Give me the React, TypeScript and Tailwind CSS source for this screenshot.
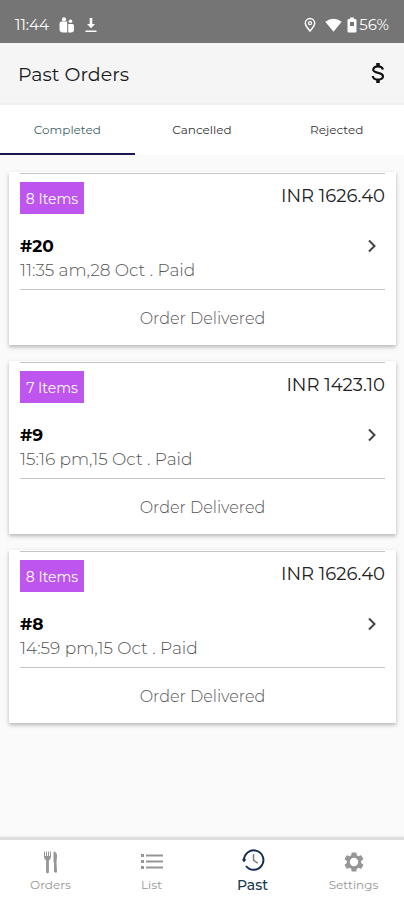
import { useState } from "react";
import type { ReactNode } from "react";

type Order = { id: string; items: number; total: string; time: string };

const orders: Order[] = [
  { id: "20", items: 8, total: "1626.40", time: "11:35 am,28 Oct . Paid" },
  { id: "9", items: 7, total: "1423.10", time: "15:16 pm,15 Oct . Paid" },
  { id: "8", items: 8, total: "1626.40", time: "14:59 pm,15 Oct . Paid" },
];

const tabs = ["Completed", "Cancelled", "Rejected"];

function StatusBar() {
  return (
    <div className="flex h-[43px] items-center justify-between bg-[#757575] px-[15px] pt-[7px] text-[15px] text-white">
      <div className="flex items-center gap-[10px]">
        <span>11:44</span>
        <svg width="16" height="16" viewBox="0 0 16 16" fill="currentColor" aria-hidden="true">
          <circle cx="5" cy="2.4" r="2.1" />
          <path d="M2.5 4.5h5.7v11H4Q.5 15.5.5 12V6.500Q.5 4.500 2.500 4.500Z" />
          <circle cx="11.500" cy="4.300" r="1.800" />
          <path d="M9.200 7h4.300Q15 7 15 8.500V12.500Q15 15.500 12 15.500H9.200Z" />
        </svg>
        <svg width="12" height="16" viewBox="0 0 12 16" fill="currentColor" aria-hidden="true">
          <path d="M4.700 1h2.600v6H10L6 11.300 2 7h2.700ZM.5 13.500h11V15H.5Z" />
        </svg>
      </div>
      <div className="flex items-center">
        <svg width="12" height="16" viewBox="0 0 12 16" fill="none" stroke="currentColor" aria-hidden="true">
          <path d="M6 14C4 11.500 1.300 8.800 1.300 6.300a4.700 4.700 0 0 1 9.400 0C10.700 8.800 8 11.500 6 14Z" strokeWidth="1.500" />
          <circle cx="6" cy="6.200" r="1.500" strokeWidth="1.300" />
        </svg>
        <svg className="ml-[9px]" width="17" height="14" viewBox="0 0 17 14" fill="currentColor" aria-hidden="true">
          <path d="M.3 3.800Q8.500-2.200 16.700 3.800L8.500 13.700Z" />
        </svg>
        <svg className="ml-[5px]" width="10" height="16" viewBox="0 0 10 16" fill="currentColor" aria-hidden="true">
          <path fillRule="evenodd" d="M3 .5h4V2h1.200Q9.500 2 9.500 3.300V14.200Q9.500 15.500 8.200 15.500H1.800Q.5 15.500.5 14.200V3.300Q.5 2 1.800 2H3ZM3 5v4h4V5Z" />
        </svg>
        <span className="ml-[2px]">56%</span>
      </div>
    </div>
  );
}

function OrderCard({ order }: { order: Order }) {
  return (
    <article className="bg-white px-[11px] pt-px shadow-[0_2px_4px_rgba(0,0,0,0.28)]">
      <div className="border-t border-[#c4c4c4] pt-2">
        <div className="flex items-start justify-between">
          <span className="flex h-8 w-16 items-center justify-center bg-[#bd55ee] pt-px text-sm text-white">
            {order.items} Items
          </span>
          <span className="text-lg leading-7 text-[#222222]">INR {order.total}</span>
        </div>
        <div className="mt-5 flex items-start justify-between">
          <div>
            <h2 className="text-[17px] leading-6 font-bold text-black">#{order.id}</h2>
            <p className="text-[17px] leading-6 font-light text-[#555555]">{order.time}</p>
          </div>
          <button type="button" aria-label={`Open order ${order.id}`} className="flex h-6 w-[26px] items-center justify-center">
            <svg width="10" height="14" viewBox="0 0 10 14" fill="none" stroke="#444444" strokeWidth="2" aria-hidden="true">
              <path d="M2 1.500 7.500 7 2 12.500" />
            </svg>
          </button>
        </div>
      </div>
      <p className="mt-[7px] flex h-14 items-center justify-center border-t border-[#c4c4c4] pt-[2px] text-base font-light text-[#555555]">
        Order Delivered
      </p>
    </article>
  );
}

function NavItem({ label, active, children }: { label: string; active?: boolean; children: ReactNode }) {
  return (
    <button
      type="button"
      aria-current={active ? "page" : undefined}
      className={`flex flex-col items-center pt-2 ${active ? "text-sm leading-5 font-medium text-[#173a4d]" : "text-xs leading-5 text-[#969696]"}`}
    >
      <span className="flex h-[27px] items-center">{children}</span>
      {label}
    </button>
  );
}

function BottomNav() {
  return (
    <nav className="sticky bottom-0 grid h-[63px] grid-cols-4 border-t-[3px] border-[#dedede] bg-white shadow-[0_-1px_2px_rgba(0,0,0,0.06)]">
      <NavItem label="Orders">
        <svg width="16" height="24" viewBox="0 0 16 24" fill="none" stroke="currentColor" aria-hidden="true">
          <path d="M1.500 1.500v6Q1.500 10 4.500 10T7.500 7.500v-6M3.500 1.500V9M5.500 1.500V9" strokeWidth="1" />
          <path d="M2 6h5v2Q6.500 10 4.500 10T2 8Z" fill="currentColor" stroke="none" />
          <path d="M4.500 9.500V22" strokeWidth="2.800" strokeLinecap="round" />
          <path d="M10.500 1.500Q14.500 2 14 7L13.500 12 14 22Q13.500 23.500 11 22V13L10.500 12Z" fill="currentColor" stroke="none" />
        </svg>
      </NavItem>
      <NavItem label="List">
        <svg width="24" height="18" viewBox="0 0 24 18" fill="currentColor" aria-hidden="true">
          <path d="M1 1h3v3H1ZM1 7h3v3H1ZM1 13h3v3H1ZM6 1.500h17v2H6ZM6 7.500h17v2H6ZM6 13.500h17v2H6Z" />
        </svg>
      </NavItem>
      <NavItem label="Past" active>
        <svg className="mb-1" width="24" height="24" viewBox="0 0 24 24" fill="none" stroke="#153052" aria-hidden="true">
          <path d="M3 12A9.700 9.700 0 1 1 5 18" strokeWidth="2" />
          <path d="M.8 11.200h4.600L3 14.500Z" fill="#153052" stroke="none" />
          <path d="M12.500 6v6.200l4.300 3" stroke="#777f86" strokeWidth="1.500" />
        </svg>
      </NavItem>
      <NavItem label="Settings">
        <svg width="24" height="24" viewBox="0 0 24 24" fill="currentColor" aria-hidden="true">
          <path d="M19.140 12.940c.04-.3.060-.61.060-.94s-.020-.64-.070-.94l2.030-1.580a.49.49 0 0 0 .12-.61l-1.920-3.320a.488.488 0 0 0-.59-.22l-2.390.96c-.5-.38-1.030-.7-1.620-.94l-.36-2.540a.484.484 0 0 0-.48-.41h-3.840c-.24 0-.43.17-.47.41l-.36 2.540c-.59.24-1.130.57-1.620.94l-2.390-.96c-.22-.08-.47 0-.59.22L2.740 8.870c-.12.21-.08.47.12.61l2.030 1.580c-.050.3-.090.63-.090.94s.020.64.070.94l-2.030 1.580a.49.49 0 0 0-.12.61l1.920 3.320c.12.22.37.29.59.22l2.390-.96c.5.38 1.030.7 1.620.94l.36 2.540c.050.24.24.41.48.41h3.840c.24 0 .44-.17.47-.41l.36-2.540c.59-.24 1.130-.56 1.620-.94l2.390.96c.22.080.47 0 .59-.22l1.920-3.320c.12-.22.070-.47-.12-.61zM12 16.200a4.200 4.200 0 1 1 0-8.400 4.200 4.200 0 0 1 0 8.400z" />
        </svg>
      </NavItem>
    </nav>
  );
}

export default function App() {
  const [selected, setSelected] = useState("Completed");
  return (
    <div className="flex min-h-screen flex-col bg-[#fafafa] font-['Montserrat','Inter',sans-serif]">
      <StatusBar />
      <header className="flex h-[62px] items-center justify-between border-b-2 border-[#f0f0f0] bg-[#f5f5f5] pt-1 pr-[14px] pl-[18px]">
        <h1 className="text-[19px] text-[#1a1a1a]">Past Orders</h1>
        <button type="button" aria-label="Payments" className="mb-1 flex h-6 w-6 items-center justify-center">
          <svg width="14" height="22" viewBox="0 0 14 22" fill="none" stroke="#111111" strokeWidth="2.200" aria-hidden="true">
            <path d="M7 1v4M7 17v4" strokeWidth="3.500" />
            <path d="M12 7.500Q11 4.300 7 4.300T2.200 7.500C2.200 11.800 12 10 12 14.300Q11.800 17.600 7 17.600T1.800 14" />
          </svg>
        </button>
      </header>
      <div role="tablist" className="grid h-[50px] grid-cols-3 bg-white">
        {tabs.map((tab) => (
          <button
            key={tab}
            type="button"
            role="tab"
            aria-selected={selected === tab}
            onClick={() => setSelected(tab)}
            className={`border-b-2 pt-[2px] text-xs ${selected === tab ? "border-[#1b1753] text-[#3c6264]" : "border-transparent text-[#333333]"}`}
          >
            {tab}
          </button>
        ))}
      </div>
      <main className="flex flex-1 flex-col gap-4 pt-[17px] pr-2 pb-4 pl-[9px]">
        {orders.map((order) => (
          <OrderCard key={order.id} order={order} />
        ))}
      </main>
      <BottomNav />
    </div>
  );
}
